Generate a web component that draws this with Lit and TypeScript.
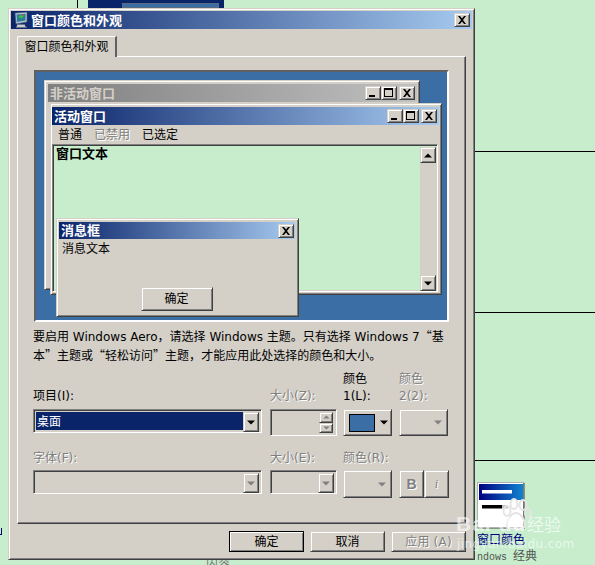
import { LitElement, html, css, svg } from "lit";
import { customElement } from "lit/decorators.js";

const minIcon = html`<svg class="glyph" viewBox="0 0 14 12"><rect x="3" y="8" width="6" height="2" fill="#000"/></svg>`;
const maxIcon = html`<svg class="glyph" viewBox="0 0 14 12"><path d="M2 1h9v9H2z M3 3v6h7V3z" fill="#000" fill-rule="evenodd"/></svg>`;
const closeIcon = html`<svg class="glyph" viewBox="0 0 14 12"><path d="M3 2h2l2 2.5L9 2h2L8 6l3 4H9L7 7.5 5 10H3l3-4z" fill="#000"/></svg>`;
const arrow = (dir: "up" | "down", color = "#000") =>
  html`<svg class="arrow" viewBox="0 0 8 5"><path d="${dir === "up" ? "M4 0.5L8 4.5H0z" : "M0 0.5h8L4 4.5z"}" fill="${color}"/></svg>`;

@customElement("app-root")
export class AppRoot extends LitElement {
  static styles = css`
    :host {
      display: block;
      position: relative;
      width: 595px;
      height: 565px;
      overflow: hidden;
      background: #c7edcc;
      font: 12px/17px "DejaVu Sans", "Noto Sans CJK SC", sans-serif;
      color: #000;
    }
    * { box-sizing: border-box; }
    .abs { position: absolute; }
    .line { background: #000; height: 1px; left: 475px; width: 120px; }
    .l1 { top: 151px; }
    .l2 { top: 312px; }
    .l3 { top: 460px; }
    .vline { left: 77px; top: 0; width: 1px; height: 8px; background: #000; }
    .topblock { left: 88px; top: 0; width: 136px; height: 8px; background: #0a246a; }
    .topinner { left: 122px; top: 3px; width: 97px; height: 5px; background: #3a6ea5; border: 1px solid #5a6a80; }
    .leftfrag { left: 0; top: 528px; width: 2px; height: 7px; border-bottom: 1px solid #000080; border-right: 1px solid #000080; }
    .botfrag { left: 206px; top: 556px; color: #777; }
    .desk-icon { left: 477px; top: 482px; width: 48px; height: 47px; }
    .desk-label { left: 477px; top: 532px; color: #000080; font-size: 12px; }
    .desk-sub { left: 477px; top: 549px; color: #555; font-family: "Liberation Mono", "Noto Sans CJK SC", monospace; font-size: 10px; white-space: pre; }
    .desk-sub span { font-size: 12px; }
    .wm-paw { left: 499px; top: 498px; width: 34px; height: 34px; }
    .wm-bai { left: 456px; top: 512px; font: bold 21px/24px "Liberation Sans", sans-serif; color: rgba(255,255,255,.62); letter-spacing: 1px; white-space: pre; }
    .wm-jy { left: 527px; top: 513px; font: 17px/22px "Noto Sans CJK SC", sans-serif; color: rgba(255,255,255,.7); }
    .wm-url { left: 457px; top: 536px; font: 12px/16px "DejaVu Sans", sans-serif; color: rgba(255,255,255,.62); letter-spacing: .4px; }

    .raised {
      background: #d4d0c8;
      border: 1px solid;
      border-color: #d4d0c8 #404040 #404040 #d4d0c8;
      box-shadow: inset 1px 1px #fff, inset -1px -1px #808080;
    }
    .sunken {
      border: 1px solid;
      border-color: #808080 #fff #fff #808080;
      box-shadow: inset 1px 1px #404040, inset -1px -1px #d4d0c8;
    }
    .dialog {
      left: 8px; top: 8px; width: 467px; height: 552px;
      padding: 2px;
      display: flex;
      flex-direction: column;
    }
    .title {
      height: 18px;
      flex: none;
      display: flex;
      align-items: center;
      color: #fff;
      font-weight: bold;
      font-size: 13px;
      padding: 0 2px;
      background: linear-gradient(to right, #0a246a, #a6caf0);
      white-space: nowrap;
    }
    .title.inactive { background: linear-gradient(to right, #808080, #c0c0c0); color: #d4d0c8; }
    .title .grow { flex: 1; }
    .t-main .monitor { width: 16px; height: 16px; margin-right: 2px; flex: none; }
    .cap {
      width: 16px; height: 14px; flex: none; padding: 0;
      display: block;
    }
    .cap.sep { margin-left: 2px; }
    .glyph { display: block; width: 14px; height: 12px; }
    .body { padding: 7px 6px 0; flex: 1; display: flex; flex-direction: column; }
    .tab {
      width: 100px; height: 21px; flex: none;
      position: relative; z-index: 1;
      background: #d4d0c8;
      border-top: 1px solid #fff;
      border-left: 1px solid #fff;
      border-right: 2px solid #606060;
      border-radius: 2px 0 0 0;
      text-align: center;
      line-height: 21px;
    }
    .panel {
      margin-top: -1px;
      height: 468px; flex: none;
      border: 1px solid;
      border-color: #fff #404040 #404040 #fff;
      box-shadow: inset -1px -1px #808080;
      padding: 13px 0 0 16px;
    }
    .preview {
      position: relative;
      width: 415px; height: 252px;
      background: #3a6ea5;
      border: 2px solid;
      border-color: #606060 #fff #fff #606060;
    }
    .win { position: absolute; }
    .w-in { left: 8px; top: 8px; width: 376px; height: 210px; padding: 3px 2px 0 3px; }
    .w-ac { left: 14px; top: 31px; width: 392px; height: 192px; padding: 3px 2px 0 1px; }
    .w-msg { left: 20px; top: 146px; width: 243px; height: 99px; padding: 3px 3px 0 2px; }
    .w-msg .title { height: 17px; padding-right: 1px; }
    .menu { display: flex; height: 19px; align-items: center; padding: 2px 0 0 6px; }
    .menu span { margin-right: 12px; }
    .dis { color: #808080; text-shadow: 1px 1px #fff; }
    .textarea {
      height: 148px;
      margin-right: 1px;
      background: #c7edcc;
      display: flex;
      justify-content: space-between;
      padding: 1px 1px 0 3px;
      font-weight: bold;
      font-size: 13px;
      line-height: 15px;
    }
    .scroll {
      width: 16px; height: 144px;
      margin-top: 1px;
      background: #d4d0c8;
      display: flex; flex-direction: column; justify-content: space-between;
    }
    .sbtn { width: 16px; height: 16px; display: flex; align-items: center; justify-content: center; }
    .arrow { width: 8px; height: 5px; display: block; }
    .msg-text { padding: 2px 0 0 3px; }
    .msg-foot { display: flex; justify-content: center; margin-top: 29px; padding-right: 1px; }
    .btn {
      width: 72px; height: 24px; padding-top: 1px;
      display: flex; align-items: center; justify-content: center;
    }
    .desc { margin: 5px 0 0 -1px; white-space: nowrap; height: 34px; line-height: 17px; }
    .q { font-family: "Noto Sans CJK SC", sans-serif; }
    .grid {
      display: grid;
      grid-template-columns: 237px 73px 56px 50px;
      grid-template-rows: 34px 31px 14px 17px 31px;
      margin: 0 0 0 -1px;
      padding-top: 10px;
    }
    .lab { align-self: end; white-space: pre-line; line-height: 17px; }
    .lab-1 { grid-row: 1; }
    .c-1 { grid-row: 2; margin-top: 4px; }
    .lab-2 { grid-row: 4; }
    .c-2 { grid-row: 5; margin-top: 3px; }
    .combo { width: 229px; height: 24px; padding: 2px; display: flex; }
    .combo.small { width: 67px; justify-content: flex-end; }
    .combo .val {
      flex: 1; background: #0a246a; color: #fff; padding-left: 1px;
      line-height: 20px;
    }
    .combo .drop { width: 16px; height: 20px; display: flex; align-items: center; justify-content: center; flex: none; margin-left: auto; }
    .spinbox { width: 67px; height: 27px; padding: 2px 3px 2px 2px; display: flex; flex-direction: column; align-items: flex-end; }
    .spin { width: 14px; height: 11px; display: flex; align-items: center; justify-content: center; }
    .spin .arrow { width: 7px; height: 4px; }
    .cbtn { width: 49px; height: 27px; display: flex; align-items: center; padding-left: 5px; }
    .cbtn.dis-btn { justify-content: flex-end; padding: 0 5px 0 0; }
    .cbtn.tall { height: 28px; }
    .swatch { width: 26px; height: 18px; background: #3a6ea5; border: 1px solid #000; margin-right: 5px; }
    .bi { display: flex; }
    .bi > div { width: 25px; height: 28px; display: flex; align-items: center; justify-content: center; color: #808080; font-weight: bold; font-size: 14px; font-family: "Liberation Sans", sans-serif; text-shadow: 1px 1px #fff; }
    .bi > div.i { font-style: italic; font-weight: normal; font-size: 12px; font-family: "Liberation Serif", serif; }
    .foot { display: flex; justify-content: flex-end; gap: 6px; margin-top: 7px; }
    .fbtn { width: 75px; height: 21px; padding-top: 1px; display: flex; align-items: center; justify-content: center; }
    .fbtn.def { outline: 1px solid #000; outline-offset: -1px; }
    .fbtn.dis { letter-spacing: .2px; }
  `;

  private caps3() {
    return html`
      <div class="cap raised">${minIcon}</div>
      <div class="cap raised">${maxIcon}</div>
      <div class="cap raised sep">${closeIcon}</div>`;
  }

  private monitor() {
    return html`<svg class="monitor" viewBox="0 0 16 16">
      <path d="M2 1l12-1v10L3 12z" fill="#b8c8d8" stroke="#405070" stroke-width=".7"/>
      <path d="M3.5 2.5l9-.8v6.8l-8.5 1.6z" fill="#2c7a9a"/>
      <path d="M5 5l3-2 3 .5-2 3z" fill="#38c040"/>
      <path d="M8.5 2.8l2.5-.2-.5 2z" fill="#d05040"/>
      <path d="M4 12.5h8v1.5l2 1.5H3l1-1.5z" fill="#c8ccd0" stroke="#606870" stroke-width=".4"/>
    </svg>`;
  }

  private deskIcon() {
    return html`<svg class="abs desk-icon" viewBox="0 0 48 47">
      <defs><linearGradient id="g" x1="0" x2="1" y1="0" y2="0"><stop offset="0" stop-color="#000080"/><stop offset="1" stop-color="#1084d0"/></linearGradient></defs>
      <rect x="0.5" y="0.5" width="46" height="45" fill="#fff" stroke="#b0b0b0"/>
      <path d="M47 1v46H1" fill="none" stroke="#404040"/>
      <rect x="2" y="2" width="44" height="16" fill="url(#g)"/>
      <rect x="5" y="8" width="30" height="3.5" fill="#fff"/>
      <rect x="5" y="23" width="20" height="3.5" fill="#000"/>
      <rect x="25" y="23" width="6" height="3.5" fill="#c0c0c0"/>
    </svg>`;
  }

  private paw() {
    return html`<svg class="abs wm-paw" viewBox="0 0 34 34">
      ${svg`<g fill="none" stroke="#e4e4e4" stroke-width="2">
        <ellipse cx="8" cy="13" rx="3.5" ry="5"/>
        <ellipse cx="15" cy="6" rx="3.5" ry="5"/>
        <ellipse cx="24" cy="7" rx="3.5" ry="5"/>
        <ellipse cx="29" cy="15" rx="3" ry="4.5"/>
        <path d="M17 15c-5 0-9 7-9 12 0 4 5 4 9 3 4 1 9 1 9-3 0-5-4-12-9-12z"/>
      </g>`}
    </svg>`;
  }

  render() {
    return html`
      <div class="abs vline"></div>
      <div class="abs topblock"></div>
      <div class="abs topinner"></div>
      <div class="abs line l1"></div>
      <div class="abs line l2"></div>
      <div class="abs line l3"></div>
      <div class="abs leftfrag"></div>
      <div class="abs botfrag">内容</div>
      ${this.deskIcon()}
      <div class="abs desk-label">窗口颜色</div>
      <div class="abs desk-sub">ndows <span>经典</span></div>

      <div class="abs dialog raised">
        <div class="title t-main">
          ${this.monitor()}<span>窗口颜色和外观</span>
          <span class="grow"></span>
          <div class="cap raised">${closeIcon}</div>
        </div>
        <div class="body">
          <div class="tab">窗口颜色和外观</div>
          <div class="panel">
            <div class="preview">
              <div class="win raised w-in">
                <div class="title inactive"><span>非活动窗口</span><span class="grow"></span>${this.caps3()}</div>
              </div>
              <div class="win raised w-ac">
                <div class="title"><span>活动窗口</span><span class="grow"></span>${this.caps3()}</div>
                <div class="menu"><span>普通</span><span class="dis">已禁用</span><span>已选定</span></div>
                <div class="textarea sunken">
                  <span>窗口文本</span>
                  <div class="scroll">
                    <div class="sbtn raised">${arrow("up")}</div>
                    <div class="sbtn raised">${arrow("down")}</div>
                  </div>
                </div>
              </div>
              <div class="win raised w-msg">
                <div class="title"><span>消息框</span><span class="grow"></span><div class="cap raised">${closeIcon}</div></div>
                <div class="msg-text">消息文本</div>
                <div class="msg-foot"><div class="btn raised">确定</div></div>
              </div>
            </div>
            <div class="desc">要启用 Windows Aero<span class="q">，</span>请选择 Windows 主题。只有选择 Windows 7<span class="q">“</span>基<br>本<span class="q">”</span>主题或<span class="q">“</span>轻松访问<span class="q">”</span>主题<span class="q">，</span>才能应用此处选择的颜色和大小。</div>
            <div class="grid">
              <div class="lab lab-1">项目(I):</div>
              <div class="lab lab-1 dis">大小(Z):</div>
              <div class="lab lab-1">颜色
1(L):</div>
              <div class="lab lab-1 dis">颜色
2(2):</div>

              <div class="c-1 combo sunken"><div class="val">桌面</div><div class="drop raised">${arrow("down")}</div></div>
              <div class="c-1 spinbox sunken">
                <div class="spin raised">${arrow("up", "#808080")}</div>
                <div class="spin raised">${arrow("down", "#808080")}</div>
              </div>
              <div class="c-1 cbtn raised"><div class="swatch"></div>${arrow("down")}</div>
              <div class="c-1 cbtn dis-btn raised">${arrow("down", "#808080")}</div>

              <div class="lab lab-2 dis">字体(F):</div>
              <div class="lab lab-2 dis">大小(E):</div>
              <div class="lab lab-2 dis">颜色(R):</div>
              <div class="lab-2"></div>

              <div class="c-2 combo sunken"><div class="drop raised">${arrow("down", "#808080")}</div></div>
              <div class="c-2 combo small sunken"><div class="drop raised">${arrow("down", "#808080")}</div></div>
              <div class="c-2 cbtn tall dis-btn raised">${arrow("down", "#808080")}</div>
              <div class="c-2 bi"><div class="raised">B</div><div class="raised i">i</div></div>
            </div>
          </div>
          <div class="foot">
            <div class="fbtn raised def">确定</div>
            <div class="fbtn raised">取消</div>
            <div class="fbtn raised dis">应用 (A)</div>
          </div>
        </div>
      </div>

      ${this.paw()}
      <div class="abs wm-bai">Bai du</div>
      <div class="abs wm-jy">经验</div>
      <div class="abs wm-url">jingyan.baidu.com</div>
    `;
  }
}
